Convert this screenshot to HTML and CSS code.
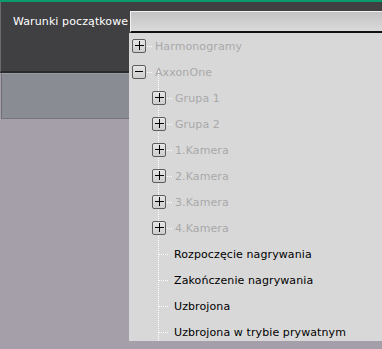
FILE: index.html
```html
<!DOCTYPE html>
<html lang="pl">
<head>
    <meta charset="UTF-8">
    <title>Warunki początkowe</title>
    <link rel="stylesheet" href="styles.css">
</head>
<body>
    <div class="page">
        <div class="header-panel">
            <span class="label">Warunki początkowe</span>
        </div>
        <div class="grey-panel"></div>

        <div class="combo">
            <div class="combo-input"></div>
            <div class="combo-list">
                <div class="row">
                    <span class="box plus"></span><span class="dots"></span>
                    <span class="text disabled">Harmonogramy</span>
                </div>
                <div class="row">
                    <span class="box"></span><span class="dots"></span>
                    <span class="text disabled">AxxonOne</span>
                </div>
                <div class="children">
                    <div class="row sub">
                        <span class="box plus"></span><span class="dots"></span>
                        <span class="text disabled">Grupa 1</span>
                    </div>
                    <div class="row sub">
                        <span class="box plus"></span><span class="dots"></span>
                        <span class="text disabled">Grupa 2</span>
                    </div>
                    <div class="row sub">
                        <span class="box plus"></span><span class="dots"></span>
                        <span class="text disabled">1.Kamera</span>
                    </div>
                    <div class="row sub">
                        <span class="box plus"></span><span class="dots"></span>
                        <span class="text disabled">2.Kamera</span>
                    </div>
                    <div class="row sub">
                        <span class="box plus"></span><span class="dots"></span>
                        <span class="text disabled">3.Kamera</span>
                    </div>
                    <div class="row sub">
                        <span class="box plus"></span><span class="dots"></span>
                        <span class="text disabled">4.Kamera</span>
                    </div>
                    <div class="row sub">
                        <span class="leaf-dots"></span>
                        <span class="text">Rozpoczęcie nagrywania</span>
                    </div>
                    <div class="row sub">
                        <span class="leaf-dots"></span>
                        <span class="text">Zakończenie nagrywania</span>
                    </div>
                    <div class="row sub">
                        <span class="leaf-dots"></span>
                        <span class="text">Uzbrojona</span>
                    </div>
                    <div class="row sub">
                        <span class="leaf-dots"></span>
                        <span class="text">Uzbrojona w trybie prywatnym</span>
                    </div>
                </div>
            </div>
        </div>
    </div>
</body>
</html>
```

FILE: styles.css
```css
html, body {
    margin: 0;
    padding: 0;
}
body {
    width: 382px;
    height: 349px;
    overflow: hidden;
    background: #a49fa9;
    font-family: "DejaVu Sans", Verdana, sans-serif;
    font-size: 11px;
}
.page {
    position: relative;
    height: 347px;
    border-top: 2px solid #0b9a6c;
}
.header-panel {
    height: 71px;
    box-sizing: border-box;
    padding: 13px 0 0 12px;
    background: #404042;
    border-left: 1px solid #6a6a6c;
    border-bottom: 2px solid #2a2a2c;
}
.label {
    color: #ffffff;
    letter-spacing: 0.1px;
}
.grey-panel {
    height: 44px;
    margin-left: 1px;
    background: #8a8c93;
    border-left: 1px solid #6e6f76;
    border-top: 1px solid #9a9ca3;
    border-bottom: 1px solid #74757c;
}

/* dropdown overlay */
.combo {
    position: absolute;
    left: 129px;
    top: 9px;
    right: 0;
}
.combo-input {
    height: 19px;
    margin-left: 1px;
    border-top: 1px solid #f2f2f2;
    border-left: 1px solid #f2f2f2;
    border-bottom: 2px solid #111111;
    background: linear-gradient(#c3c3c3, #dadada);
}
.combo-list {
    height: 308px;
    overflow: hidden;
    background: #d8d8d8;
}
.row {
    display: flex;
    align-items: center;
    height: 26px;
    padding-left: 3px;
}
.box {
    position: relative;
    flex: none;
    width: 14px;
    height: 14px;
    box-sizing: border-box;
    border: 1px solid #5e5e5e;
    border-radius: 2px;
    background: linear-gradient(#e6e6e6, #cdcdcd);
}
.box::before,
.box.plus::after {
    content: "";
    position: absolute;
    background: #000;
}
.box::before {
    left: 2px;
    top: 5px;
    width: 8px;
    height: 1px;
}
.box.plus::after {
    left: 6px;
    top: 1px;
    width: 1px;
    height: 9px;
}
.box.plus::before {
    left: 2px;
    width: 9px;
}
.dots {
    width: 5px;
    margin: 0 3px 0 1px;
    border-top: 1px dotted #ffffff;
}
.text {
    color: #000;
    white-space: nowrap;
    letter-spacing: 0.1px;
}
.text.disabled {
    color: #a9a9a9;
}
.children {
    position: relative;
}
.children::before {
    content: "";
    position: absolute;
    left: 29px;
    top: -14px;
    bottom: 0;
    border-left: 1px dotted #ffffff;
}
.row.sub {
    padding-left: 23px;
}
.leaf-dots {
    width: 9px;
    margin: 0 6px 0 7px;
    border-top: 1px dotted #ffffff;
}
```
